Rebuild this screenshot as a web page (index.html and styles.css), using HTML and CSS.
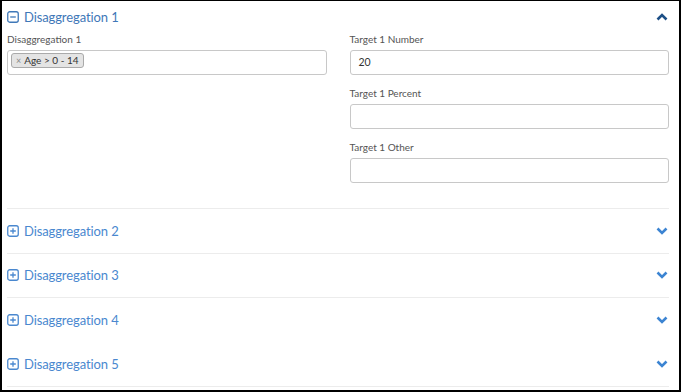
FILE: index.html
```html
<!DOCTYPE html>
<html>
<head>
<meta charset="utf-8">
<link rel="stylesheet" href="styles.css">
</head>
<body>
<div class="frame">
  <section class="panel open">
    <div class="panel-head">
      <svg class="toggle" width="12" height="12" viewBox="0 0 12 12"><rect x="0.75" y="0.75" width="10.5" height="10.5" rx="2" fill="none" stroke="currentColor" stroke-width="1.3"/><path d="M3.2 6H8.8" stroke="currentColor" stroke-width="1.3"/></svg>
      <span class="title">Disaggregation 1</span>
      <svg class="chev up" width="12" height="8" viewBox="0 0 12 8"><path d="M1.5 6.5L6 2L10.5 6.5" fill="none" stroke="currentColor" stroke-width="2.6"/></svg>
    </div>
    <div class="panel-body">
      <div class="col">
        <div class="field">
          <label class="label">Disaggregation 1</label>
          <div class="input multi"><span class="tag"><span class="x">×</span>Age &gt; 0 - 14</span></div>
        </div>
      </div>
      <div class="col">
        <div class="field">
          <label class="label">Target 1 Number</label>
          <div class="input">20</div>
        </div>
        <div class="field">
          <label class="label">Target 1 Percent</label>
          <div class="input"></div>
        </div>
        <div class="field">
          <label class="label">Target 1 Other</label>
          <div class="input"></div>
        </div>
      </div>
    </div>
  </section>
  <section class="panel">
    <div class="panel-head">
      <svg class="toggle" width="12" height="12" viewBox="0 0 12 12"><rect x="0.75" y="0.75" width="10.5" height="10.5" rx="2" fill="none" stroke="currentColor" stroke-width="1.3"/><path d="M3.2 6H8.8M6 3.2V8.8" stroke="currentColor" stroke-width="1.3"/></svg>
      <span class="title">Disaggregation 2</span>
      <svg class="chev" width="12" height="8" viewBox="0 0 12 8"><path d="M1.5 1.5L6 6L10.5 1.5" fill="none" stroke="currentColor" stroke-width="2.6"/></svg>
    </div>
  </section>
  <section class="panel">
    <div class="panel-head">
      <svg class="toggle" width="12" height="12" viewBox="0 0 12 12"><rect x="0.75" y="0.75" width="10.5" height="10.5" rx="2" fill="none" stroke="currentColor" stroke-width="1.3"/><path d="M3.2 6H8.8M6 3.2V8.8" stroke="currentColor" stroke-width="1.3"/></svg>
      <span class="title">Disaggregation 3</span>
      <svg class="chev" width="12" height="8" viewBox="0 0 12 8"><path d="M1.5 1.5L6 6L10.5 1.5" fill="none" stroke="currentColor" stroke-width="2.6"/></svg>
    </div>
  </section>
  <section class="panel noline">
    <div class="panel-head">
      <svg class="toggle" width="12" height="12" viewBox="0 0 12 12"><rect x="0.75" y="0.75" width="10.5" height="10.5" rx="2" fill="none" stroke="currentColor" stroke-width="1.3"/><path d="M3.2 6H8.8M6 3.2V8.8" stroke="currentColor" stroke-width="1.3"/></svg>
      <span class="title">Disaggregation 4</span>
      <svg class="chev" width="12" height="8" viewBox="0 0 12 8"><path d="M1.5 1.5L6 6L10.5 1.5" fill="none" stroke="currentColor" stroke-width="2.6"/></svg>
    </div>
  </section>
  <section class="panel">
    <div class="panel-head">
      <svg class="toggle" width="12" height="12" viewBox="0 0 12 12"><rect x="0.75" y="0.75" width="10.5" height="10.5" rx="2" fill="none" stroke="currentColor" stroke-width="1.3"/><path d="M3.2 6H8.8M6 3.2V8.8" stroke="currentColor" stroke-width="1.3"/></svg>
      <span class="title">Disaggregation 5</span>
      <svg class="chev" width="12" height="8" viewBox="0 0 12 8"><path d="M1.5 1.5L6 6L10.5 1.5" fill="none" stroke="currentColor" stroke-width="2.6"/></svg>
    </div>
  </section>
</div>
</body>
</html>
```
FILE: styles.css
```css
html, body {
  margin: 0;
  padding: 0;
  background: #fff;
}
body {
  font-family: Lato, "Open Sans", sans-serif;
  color: #333;
}
.frame {
  width: 681px;
  height: 392px;
  box-sizing: border-box;
  border: 2px solid #000;
  border-top-width: 1px;
  padding: 0 10px 0 5px;
  overflow: hidden;
}
.panel {
  border-bottom: 1px solid #ececec;
}
.panel.noline {
  border-bottom-color: transparent;
}
.panel-head {
  display: flex;
  align-items: center;
  height: 43.5px;
  color: #4a88cf;
}
.panel.open .panel-head {
  height: 31px;
  color: #3f78b8;
}
.toggle {
  flex: none;
  margin-right: 5px;
}
.title {
  flex: 1;
  font-size: 13px;
  line-height: 18px;
  letter-spacing: -0.1px;
}
.chev {
  flex: none;
  margin-right: 1px;
  color: #3c84d2;
}
.chev.up {
  color: #1c4f86;
}
.panel-body {
  display: grid;
  grid-template-columns: 1fr 1fr;
  column-gap: 23px;
  padding-bottom: 14px;
}
.field {
  margin-bottom: 11px;
}
.label {
  display: block;
  font-size: 10px;
  line-height: 14px;
  color: #555;
  margin-bottom: 4px;
}
.input {
  height: 25px;
  box-sizing: border-box;
  border: 1px solid #c8c8c8;
  border-radius: 3px;
  font-size: 10.5px;
  line-height: 23px;
  padding: 0 8px;
  color: #333;
}
.input.multi {
  padding: 2px 3px;
  display: flex;
  align-items: flex-start;
}
.tag {
  display: inline-flex;
  align-items: center;
  height: 15px;
  box-sizing: border-box;
  padding: 0 4px;
  background: #e4e4e4;
  border: 1px solid #aaa;
  border-radius: 3px;
  font-size: 10px;
  line-height: 13px;
  color: #333;
}
.tag .x {
  color: #888;
  font-size: 9px;
  margin-right: 3px;
}
```
